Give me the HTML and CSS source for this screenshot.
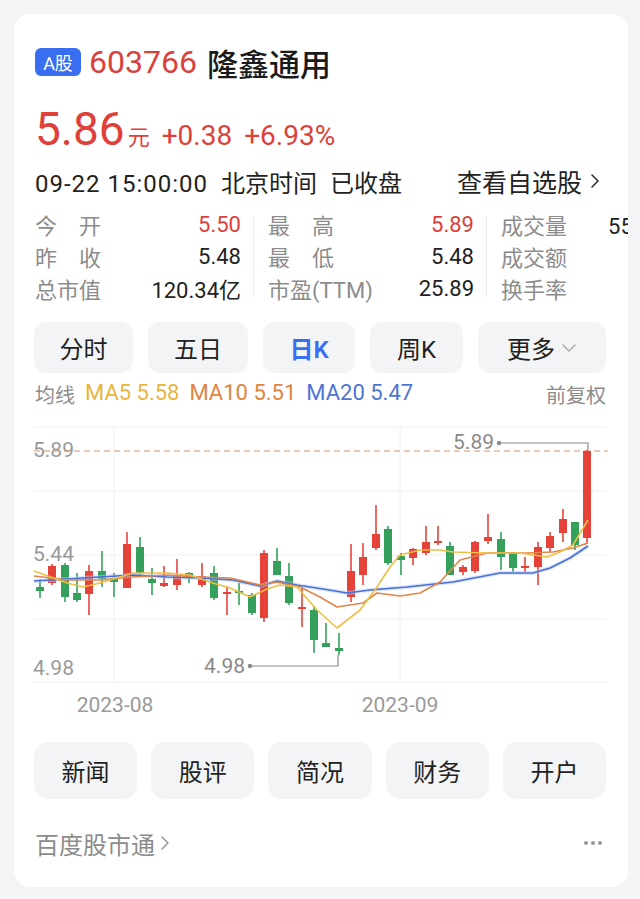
FILE: index.html
```html
<!DOCTYPE html>
<html lang="zh-CN">
<head>
    <meta charset="UTF-8">
    <meta name="viewport" content="width=device-width, initial-scale=1.0">
    <title>隆鑫通用 603766</title>
    <link rel="stylesheet" href="styles.css">
</head>
<body>
    <div class="card">
        <div class="title-row">
            <span class="badge">A股</span>
            <span class="code">603766</span>
            <span class="name">隆鑫通用</span>
        </div>

        <div class="price-row">
            <span class="price">5.86</span><span class="unit">元</span>
            <span class="change">+0.38</span>
            <span class="change">+6.93%</span>
        </div>

        <div class="time-row">
            <span class="time"><span class="clock">09-22 15:00:00</span> 北京时间 已收盘</span>
            <span class="watch">查看自选股
                <svg class="chev" width="10" height="16" viewBox="0 0 10 16"><path d="M2 2 L8 8 L2 14" fill="none" stroke="#333" stroke-width="1.6" stroke-linecap="round" stroke-linejoin="round"/></svg>
            </span>
        </div>

        <div class="stats">
            <div class="stat-col">
                <div class="stat"><span class="label">今　开</span><span class="val up">5.50</span></div>
                <div class="stat"><span class="label">昨　收</span><span class="val">5.48</span></div>
                <div class="stat"><span class="label">总市值</span><span class="val">120.34亿</span></div>
            </div>
            <div class="divider"></div>
            <div class="stat-col">
                <div class="stat"><span class="label">最　高</span><span class="val up">5.89</span></div>
                <div class="stat"><span class="label">最　低</span><span class="val">5.48</span></div>
                <div class="stat"><span class="label">市盈(TTM)</span><span class="val">25.89</span></div>
            </div>
            <div class="divider"></div>
            <div class="stat-col last">
                <div class="stat"><span class="label">成交量</span><span class="val">55.78万</span></div>
                <div class="stat"><span class="label">成交额</span></div>
                <div class="stat"><span class="label">换手率</span></div>
            </div>
        </div>

        <div class="tabs">
            <div class="tab">分时</div>
            <div class="tab">五日</div>
            <div class="tab active">日K</div>
            <div class="tab">周K</div>
            <div class="tab">更多
                <svg class="down" width="16" height="10" viewBox="0 0 16 10"><path d="M2 2 L8 8 L14 2" fill="none" stroke="#aaa" stroke-width="1.5" stroke-linecap="round" stroke-linejoin="round"/></svg>
            </div>
        </div>

        <div class="ma-row">
            <div class="ma-list">
                <span class="ma-title">均线</span>
                <span class="ma5">MA5 5.58</span>
                <span class="ma10">MA10 5.51</span>
                <span class="ma20">MA20 5.47</span>
            </div>
            <span class="ma-title">前复权</span>
        </div>

        <!-- viewBox uses page coordinates so the chart numbers read like the screen -->
        <svg class="chart" width="614" height="300" viewBox="14 420 614 300">
            <g stroke="#f0f0f2" stroke-width="1">
                <line x1="34" y1="427" x2="607" y2="427"/>
                <line x1="34" y1="491" x2="607" y2="491"/>
                <line x1="34" y1="555" x2="607" y2="555"/>
                <line x1="34" y1="619" x2="607" y2="619"/>
                <line x1="34" y1="682" x2="607" y2="682"/>
                <line x1="114" y1="427" x2="114" y2="682"/>
                <line x1="400" y1="427" x2="400" y2="682"/>
            </g>
            <g class="axis">
                <text x="33" y="457">5.89</text>
                <text x="33" y="561">5.44</text>
                <text x="33" y="675">4.98</text>
                <text x="115" y="712" text-anchor="middle">2023-08</text>
                <text x="400" y="712" text-anchor="middle">2023-09</text>
            </g>
            <line x1="34" y1="451" x2="608" y2="451" stroke="#d9946a" stroke-width="1.2" stroke-dasharray="6 4"/>

            <g id="candles"></g>

            <g fill="none" stroke-width="1.6" stroke-linejoin="round">
                <polyline stroke="#b9cdf5" stroke-width="4" opacity="0.5" points="34,581 67,579 100,577 133,575 167,577 200,578 233,580 260,586 277,581 297,585 323,589 347,593 370,590 407,587 453,582 500,573 533,573 550,568 570,558 588,546"/>
                <polyline stroke="#4a6fd6" points="34,581 67,579 100,577 133,575 167,577 200,578 233,580 260,586 277,581 297,585 323,589 347,593 370,590 407,587 453,582 500,573 533,573 550,568 570,558 588,546"/>
                <polyline stroke="#e0864a" points="34,576 67,580 100,580 133,577 167,575 200,577 230,578 260,585 277,582 300,587 320,597 337,607 363,603 377,593 400,596 420,593 440,582 460,560 487,553 527,553 553,552 573,548 588,543"/>
                <polyline stroke="#efbf45" points="34,571 67,583 83,587 100,583 133,573 167,573 190,575 213,583 230,588 250,597 267,589 280,585 297,587 317,610 337,628 360,610 377,587 390,567 400,555 420,550 440,550 453,552 487,553 520,553 547,557 560,552 573,545 588,520"/>
            </g>

            <g class="marker">
                <polyline points="499,443 588,443 588,450" fill="none"/>
                <circle cx="499" cy="443" r="2.2"/>
                <text x="494" y="449" text-anchor="end">5.89</text>
                <polyline points="250,666 338,666 338,655" fill="none"/>
                <circle cx="250" cy="666" r="2.2"/>
                <text x="245" y="673" text-anchor="end">4.98</text>
            </g>
        </svg>

        <div class="actions">
            <div class="action">新闻</div>
            <div class="action">股评</div>
            <div class="action">简况</div>
            <div class="action">财务</div>
            <div class="action">开户</div>
        </div>

        <div class="footer">
            <span class="source">百度股市通
                <svg class="chev" width="10" height="16" viewBox="0 0 10 16"><path d="M2 2 L8 8 L2 14" fill="none" stroke="#999" stroke-width="1.5" stroke-linecap="round" stroke-linejoin="round"/></svg>
            </span>
            <svg width="20" height="6" viewBox="0 0 20 6"><circle cx="3" cy="3" r="2" fill="#999"/><circle cx="10" cy="3" r="2" fill="#999"/><circle cx="17" cy="3" r="2" fill="#999"/></svg>
        </div>
    </div>

    <script>
        // x, body top, body bottom, wick top, wick bottom, up (1 red / 0 green)
        const candles = [
            [40, 587, 591, 579, 598, 0], [52, 566, 583, 564, 585, 1], [65, 565, 597, 563, 602, 0],
            [77, 593, 600, 573, 602, 0], [89, 571, 594, 565, 615, 1], [102, 571, 579, 551, 587, 0],
            [114, 578, 582, 573, 597, 0], [127, 544, 588, 532, 588, 1], [140, 547, 573, 537, 577, 0],
            [152, 579, 583, 568, 595, 0], [164, 583, 586, 566, 587, 1], [177, 576, 585, 559, 590, 1],
            [189, 573, 577, 572, 583, 0], [202, 576, 585, 563, 587, 1], [214, 573, 598, 566, 600, 0],
            [227, 592, 594, 586, 615, 1], [239, 591, 593, 583, 605, 0], [252, 595, 613, 593, 615, 0],
            [264, 553, 618, 550, 622, 1], [277, 561, 575, 548, 575, 0], [289, 576, 603, 563, 605, 0],
            [302, 607, 609, 588, 627, 1], [314, 610, 640, 607, 653, 0], [326, 643, 647, 623, 647, 0],
            [339, 648, 651, 633, 655, 0], [351, 571, 597, 544, 602, 1], [363, 557, 575, 543, 585, 1],
            [376, 534, 548, 505, 550, 1], [388, 529, 563, 526, 565, 0], [401, 556, 560, 553, 575, 0],
            [413, 549, 558, 548, 565, 1], [426, 542, 553, 526, 555, 1], [438, 541, 543, 526, 545, 1],
            [450, 546, 575, 542, 575, 0], [463, 567, 572, 565, 575, 1], [475, 542, 571, 541, 573, 1],
            [488, 537, 541, 514, 544, 1], [501, 539, 557, 532, 570, 0], [513, 552, 568, 552, 572, 0],
            [525, 566, 568, 557, 572, 1], [538, 547, 567, 542, 585, 1], [550, 536, 548, 532, 552, 1],
            [563, 519, 533, 509, 542, 1], [575, 522, 545, 522, 550, 0], [587, 451, 538, 450, 544, 1]
        ];

        let svg = '';
        for (const [x, top, bottom, high, low, up] of candles) {
            const color = up ? '#e5433a' : '#34a05b';
            const h = Math.max(bottom - top, 2);
            svg += `<line x1="${x}" y1="${high}" x2="${x}" y2="${low}" stroke="${color}" stroke-width="1.6"/>`;
            svg += `<rect x="${x - 4}" y="${top}" width="8" height="${h}" fill="${color}"/>`;
        }
        document.getElementById('candles').innerHTML = svg;
    </script>
</body>
</html>
```

FILE: styles.css
```css
body {
    margin: 0;
    background: #f3f4f6;
    font-family: Roboto, "Noto Sans CJK SC", sans-serif;
    color: #222;
}
.card {
    margin: 14px 12px 12px 14px;
    padding: 28px 22px 26px 21px;
    background: #fff;
    border-radius: 16px;
    overflow: hidden;
}
.title-row {
    display: flex;
    align-items: center;
    height: 40px;
}
.badge {
    display: flex;
    align-items: center;
    justify-content: center;
    width: 46px;
    height: 28px;
    margin-right: 8px;
    background: #3a6ef0;
    color: #fff;
    font-size: 18px;
    border-radius: 6px;
}
.code {
    font-size: 32px;
    color: #d9423b;
    margin-right: 10px;
}
.name {
    font-size: 31px;
    font-weight: 500;
    color: #1a1a1a;
}
.price-row {
    display: flex;
    align-items: baseline;
    height: 50px;
    margin-top: 20px;
    color: #e0403a;
}
.price {
    font-size: 46px;
}
.unit {
    font-size: 22px;
    margin-left: 3px;
}
.change {
    font-size: 28px;
    margin-left: 12px;
}
.time-row {
    display: flex;
    justify-content: space-between;
    align-items: center;
    height: 30px;
    margin-top: 14px;
    font-size: 24px;
    color: #222;
}
.time {
    word-spacing: 7px;
}
.clock {
    letter-spacing: 1px;
    word-spacing: 0;
}
.watch {
    display: flex;
    align-items: center;
    gap: 8px;
    margin-right: 6px;
    font-size: 25px;
}
.stats {
    display: flex;
    margin-top: 12px;
    font-size: 22px;
}
.stat-col {
    flex: none;
    width: 206px;
}
.divider {
    flex: none;
    align-self: center;
    width: 1px;
    height: 81px;
    background: #ececec;
    margin: 0 14px 0 12px;
}
.stat {
    display: flex;
    justify-content: space-between;
    align-items: center;
    height: 32px;
}
.stat-col.last .stat {
    justify-content: flex-start;
    gap: 41px;
}
.label {
    color: #8c8c8c;
}
.val {
    color: #222;
}
.val.up {
    color: #e0403a;
}
.tabs {
    display: grid;
    grid-template-columns: 99px 100px 92px 93px 128px;
    gap: 15px;
    margin-top: 18px;
    margin-left: -1px;
}
.tab {
    display: flex;
    align-items: center;
    justify-content: center;
    gap: 6px;
    height: 51px;
    background: #f3f4f6;
    border-radius: 12px;
    font-size: 24px;
    color: #222;
}
.tab.active {
    color: #3a6ef0;
    font-weight: 600;
}
.ma-row {
    display: flex;
    justify-content: space-between;
    align-items: center;
    height: 26px;
    margin-top: 8px;
    font-size: 22px;
}
.ma-list {
    display: flex;
    gap: 10px;
}
.ma-title {
    color: #8c8c8c;
    font-size: 20px;
}
.ma5 {
    color: #e8b53d;
}
.ma10 {
    color: #e2843f;
}
.ma20 {
    color: #4f74d4;
}
.chart {
    display: block;
    margin: 13px 0 0 -21px;
}
.axis text {
    font-size: 21px;
    fill: #9a9a9a;
}
.marker polyline {
    stroke: #8a8a8a;
    stroke-width: 1.2;
}
.marker circle {
    fill: #8a8a8a;
}
.marker text {
    font-size: 21px;
    fill: #8a8a8a;
}
.actions {
    display: grid;
    grid-template-columns: repeat(5, 1fr);
    gap: 14px;
    margin-top: 22px;
    margin-left: -1px;
}
.action {
    display: flex;
    align-items: center;
    justify-content: center;
    height: 57px;
    background: #f3f4f6;
    border-radius: 14px;
    font-size: 24px;
    color: #222;
}
.footer {
    display: flex;
    justify-content: space-between;
    align-items: center;
    height: 36px;
    margin-top: 26px;
    padding-right: 3px;
}
.source {
    display: flex;
    align-items: center;
    gap: 5px;
    font-size: 24px;
    color: #8c8c8c;
}
```
